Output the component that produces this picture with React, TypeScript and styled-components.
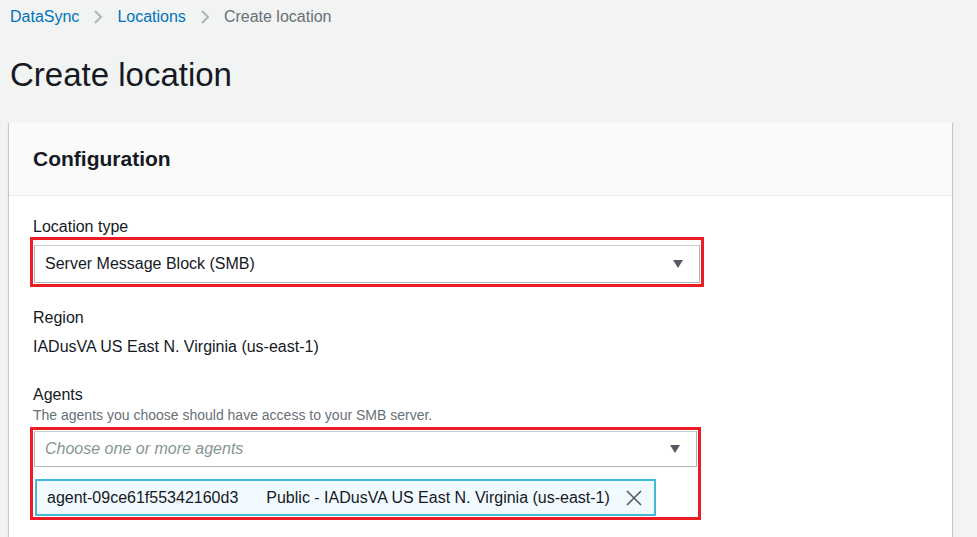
import styled, { createGlobalStyle } from 'styled-components';

const GlobalStyle = createGlobalStyle`
  html, body {
    margin: 0;
    padding: 0;
    background: #f2f3f3;
    font-family: "Liberation Sans", Arial, sans-serif;
    color: #16191f;
  }
`;

const Page = styled.div`
  padding: 6px 25px 0 9px;
  height: 537px;
  box-sizing: border-box;
  overflow: hidden;
`;

const Breadcrumbs = styled.nav`
  display: flex;
  align-items: center;
  gap: 14px;
  height: 22px;
  font-size: 16px;
  padding-left: 1px;
`;

const Crumb = styled.span<{ $current?: boolean }>`
  color: ${(p) => (p.$current ? '#687078' : '#0073bb')};
`;

const Title = styled.h1`
  margin: 27px 0 0 1px;
  font-size: 33px;
  font-weight: 400;
  line-height: 40px;
  color: #16191f;
`;

const Card = styled.section`
  margin-top: 27px;
  background: #fff;
  box-shadow: 0 1px 1px 0 rgba(0, 28, 36, 0.3), 1px 1px 1px 0 rgba(0, 28, 36, 0.15),
    -1px 1px 1px 0 rgba(0, 28, 36, 0.15);
`;

const CardHeader = styled.header`
  height: 74px;
  box-sizing: border-box;
  display: flex;
  align-items: center;
  padding: 0 24px;
  background: #fafafa;
  border-bottom: 1px solid #eaeded;
`;

const CardTitle = styled.h2`
  margin: 0;
  font-size: 21px;
  font-weight: 700;
`;

const CardBody = styled.div`
  padding: 20px 24px 40px 24px;
`;

const Field = styled.div<{ $gap?: number }>`
  margin-top: ${(p) => p.$gap ?? 0}px;
`;

const Label = styled.div`
  font-size: 16px;
  line-height: 21px;
`;

const Description = styled.div`
  font-size: 14px;
  line-height: 18px;
  color: #687078;
  margin-top: 1px;
`;

const Value = styled.div`
  font-size: 16px;
  line-height: 22px;
  margin-top: 8px;
`;

const Highlight = styled.div<{ $top: number; $right: number; $mt: number }>`
  border: 3px solid #ec1c24;
  margin-top: ${(p) => p.$mt}px;
  margin-left: -3px;
  width: ${(p) => p.$right}px;
  padding: ${(p) => p.$top}px 1px 1px 1px;
  box-sizing: border-box;
`;

const Select = styled.div<{ $h: number }>`
  height: ${(p) => p.$h}px;
  box-sizing: border-box;
  border: 1px solid #aab7b8;
  border-top-color: #c6cfd0;
  display: flex;
  align-items: center;
  justify-content: space-between;
  padding: 0 16px 0 10px;
  font-size: 16px;
  background: #fff;
`;

const Placeholder = styled.span`
  color: #879596;
  font-style: italic;
`;

const Caret = styled.span`
  width: 0;
  height: 0;
  border-left: 5px solid transparent;
  border-right: 5px solid transparent;
  border-top: 8px solid #545b64;
`;

const TokenArea = styled.div`
  padding-top: 12px;
`;

const Token = styled.div`
  display: inline-flex;
  align-items: center;
  height: 37px;
  box-sizing: border-box;
  margin-left: 1px;
  padding: 0 12px 0 10px;
  border: 2px solid #44b9d6;
  background: #f1faff;
  font-size: 16px;
`;

const TokenLabel = styled.span`
  margin-left: 28px;
`;

const Dismiss = styled.span`
  display: flex;
  margin-left: 16px;
`;

const Chevron = () => (
  <svg width="10" height="16" viewBox="0 0 10 16">
    <path d="M2 2 L8 8 L2 14" fill="none" stroke="#aab7b8" strokeWidth="2" />
  </svg>
);

export default function App() {
  return (
    <Page>
      <GlobalStyle />
      <Breadcrumbs>
        <Crumb>DataSync</Crumb>
        <Chevron />
        <Crumb>Locations</Crumb>
        <Chevron />
        <Crumb $current>Create location</Crumb>
      </Breadcrumbs>
      <Title>Create location</Title>
      <Card>
        <CardHeader>
          <CardTitle>Configuration</CardTitle>
        </CardHeader>
        <CardBody>
          <Field>
            <Label>Location type</Label>
            <Highlight $top={5} $right={674} $mt={0}>
              <Select $h={38}>
                <span>Server Message Block (SMB)</span>
                <Caret />
              </Select>
            </Highlight>
          </Field>
          <Field $gap={20}>
            <Label>Region</Label>
            <Value>IADusVA US East N. Virginia (us-east-1)</Value>
          </Field>
          <Field $gap={26}>
            <Label>Agents</Label>
            <Description>The agents you choose should have access to your SMB server.</Description>
            <Highlight $top={1} $right={671} $mt={3}>
              <Select $h={36}>
                <Placeholder>Choose one or more agents</Placeholder>
                <Caret />
              </Select>
              <TokenArea>
                <Token>
                  <span>agent-09ce61f55342160d3</span>
                  <TokenLabel>Public - IADusVA US East N. Virginia (us-east-1)</TokenLabel>
                  <Dismiss>
                    <svg width="16" height="16" viewBox="0 0 16 16">
                      <path d="M1 1 L15 15 M15 1 L1 15" stroke="#545b64" strokeWidth="1.6" fill="none" />
                    </svg>
                  </Dismiss>
                </Token>
              </TokenArea>
            </Highlight>
          </Field>
        </CardBody>
      </Card>
    </Page>
  );
}
